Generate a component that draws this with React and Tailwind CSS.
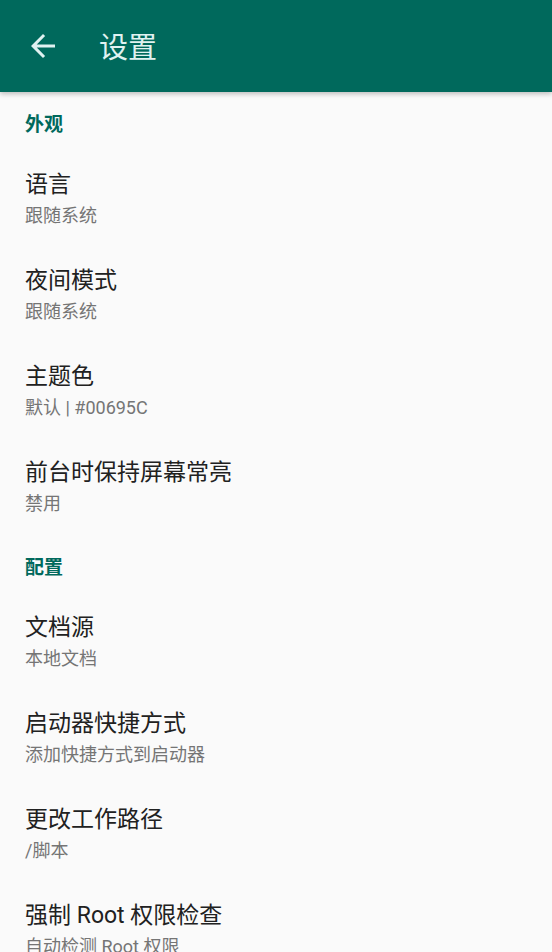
import React from 'react';

const sections = [
  {
    title: '外观',
    items: [
      { title: '语言', sub: '跟随系统' },
      { title: '夜间模式', sub: '跟随系统' },
      { title: '主题色', sub: '默认 | #00695C' },
      { title: '前台时保持屏幕常亮', sub: '禁用' },
    ],
  },
  {
    title: '配置',
    items: [
      { title: '文档源', sub: '本地文档' },
      { title: '启动器快捷方式', sub: '添加快捷方式到启动器' },
      { title: '更改工作路径', sub: '/脚本' },
      { title: '强制 Root 权限检查', sub: '自动检测 Root 权限' },
    ],
  },
];

function BackArrow() {
  return (
    <svg viewBox="0 0 24 24" className="h-9 w-9" fill="currentColor">
      <path d="M20 11H7.83l5.59-5.59L12 4l-8 8 8 8 1.41-1.41L7.83 13H20v-2z" />
    </svg>
  );
}

export default function App() {
  return (
    <div
      className="h-[952px] w-[552px] overflow-hidden bg-[#fafafa]"
      style={{ fontFamily: '"Roboto", "Noto Sans CJK SC", sans-serif' }}
    >
      <header className="relative z-10 flex h-[92px] items-center bg-[#00695c] shadow-[0_2px_5px_rgba(0,0,0,0.25)]">
        <div className="ml-[25px] text-[#e0f2f1]">
          <BackArrow />
        </div>
        <h1 className="ml-[38px] mt-[5px] text-[29px] leading-none text-[#e0f2f1]">设置</h1>
      </header>

      {sections.map((section) => (
        <section key={section.title}>
          <div className="px-[25px] pt-[21px] pb-[14px] text-[19px] leading-[24px] font-bold text-[#00695c]">
            {section.title}
          </div>
          {section.items.map((item) => (
            <div key={item.title} className="h-[96px] px-[25px] pt-[19px]">
              <div className="text-[23px] leading-[30px] text-[#212121]">{item.title}</div>
              <div className="mt-1 text-[18px] leading-[24px] text-[#757575]">{item.sub}</div>
            </div>
          ))}
        </section>
      ))}
    </div>
  );
}
